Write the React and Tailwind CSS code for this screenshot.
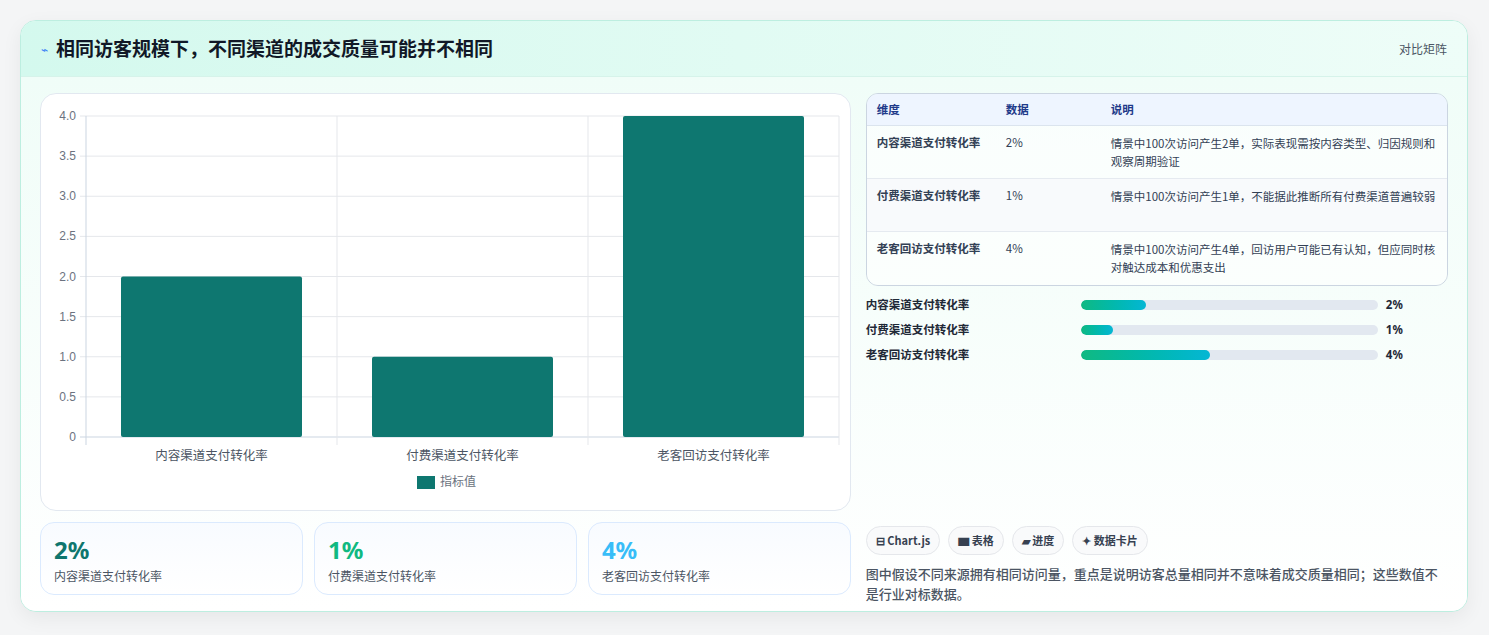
export default function App() {
  const f = { fontFamily: '"Noto Sans CJK SC", "Noto Sans", sans-serif' };
  const rows = [
    ["内容渠道支付转化率", "2%", "情景中100次访问产生2单，实际表现需按内容类型、归因规则和观察周期验证"],
    ["付费渠道支付转化率", "1%", "情景中100次访问产生1单，不能据此推断所有付费渠道普遍较弱"],
    ["老客回访支付转化率", "4%", "情景中100次访问产生4单，回访用户可能已有认知，但应同时核对触达成本和优惠支出"],
  ];
  const bars = [["内容渠道支付转化率", 2, 22], ["付费渠道支付转化率", 1, 11], ["老客回访支付转化率", 4, 43.5]];
  const W = 753, H = 321, X0 = 45, Y0 = 22;
  const cats = ["内容渠道支付转化率", "付费渠道支付转化率", "老客回访支付转化率"];
  const vals = [2, 1, 4];
  return (
    <div className="w-[1489px] h-[635px] bg-[#f4f5f6] pt-[20px] px-[20px]" style={f}>
      <div className="w-[1448px] h-[592px] rounded-[16px] border border-[#bdeee0] bg-white shadow-[0_6px_20px_rgba(0,0,0,0.06)] overflow-hidden flex flex-col">
        <div className="h-[56px] shrink-0 flex items-center justify-between px-[20px] bg-gradient-to-r from-[#d4f9ee] to-[#eefdf8] border-b border-[#d6f3ea]">
          <div className="flex items-center gap-[8px]">
            <span className="text-[#3b82f6] text-[12px]">⌁</span>
            <span className="text-[19px] font-bold text-[#111827]">相同访客规模下，不同渠道的成交质量可能并不相同</span>
          </div>
          <span className="text-[12px] text-[#4b5563]">对比矩阵</span>
        </div>
        <div className="flex-1 flex gap-[15px] px-[19px] pt-[16px] bg-gradient-to-b from-[#f0fdf8] to-white">
          <div className="w-[812px] flex flex-col gap-[11px]">
            <div className="h-[418px] rounded-[16px] border border-[#e2e8f0] bg-white relative">
              <svg width="812" height="418" className="absolute left-0 top-0">
                {[0, 0.5, 1, 1.5, 2, 2.5, 3, 3.5, 4].map((v) => {
                  const y = Y0 + H - (v / 4) * H;
                  return (
                    <g key={v}>
                      <line x1={X0 - 6} x2={X0 + W} y1={y} y2={y} stroke={v === 0 ? "#cbd5e1" : "#e5e7eb"} />
                      <text x={X0 - 10} y={y + 4} textAnchor="end" fontSize="12" fill="#6b7280" fontFamily="Liberation Sans, sans-serif">{v === 0 ? "0" : v.toFixed(1)}</text>
                    </g>
                  );
                })}
                {[0, 1, 2, 3].map((i) => (
                  <line key={i} x1={X0 + (i * W) / 3} x2={X0 + (i * W) / 3} y1={Y0} y2={Y0 + H + 8} stroke={i === 0 ? "#cbd5e1" : "#e5e7eb"} />
                ))}
                {vals.map((v, i) => {
                  const bw = 181, cx = X0 + (i + 0.5) * (W / 3);
                  const h = (v / 4) * H;
                  return (
                    <g key={i}>
                      <rect x={cx - bw / 2} y={Y0 + H - h} width={bw} height={h} rx="2" fill="#0e7770" />
                      <text x={cx} y={Y0 + H + 23} textAnchor="middle" fontSize="12.5" fill="#4b5563" style={f}>{cats[i]}</text>
                    </g>
                  );
                })}
                <rect x="376" y="382" width="18" height="13" fill="#0e7770" />
                <text x="399" y="392" fontSize="12" fill="#6b7280" style={f}>指标值</text>
              </svg>
            </div>
            <div className="flex gap-[11px]">
              {bars.map(([l, v], i) => (
                <div key={i} className="flex-1 h-[73px] rounded-[14px] border border-[#dbeafe] bg-gradient-to-b from-[#f8fbff] to-white px-[13px] pt-[12px]">
                  <div className={`text-[24px] font-bold leading-[30px] ${i === 0 ? "text-[#0f766e]" : i === 1 ? "text-[#10b981]" : "text-[#38bdf8]"}`} style={{ fontFamily: '"Noto Sans", sans-serif' }}>{v}%</div>
                  <div className="text-[12px] text-[#4b5563] mt-[2px]">{l}</div>
                </div>
              ))}
            </div>
          </div>
          <div className="w-[583px] flex flex-col">
            <div className="rounded-[12px] border border-[#cbd5e1] overflow-hidden text-[11.5px]">
              <div className="flex h-[32px] items-center bg-[#eef5ff] border-b border-[#dbe4ee] text-[#1e3a8a] font-bold">
                <div className="w-[139px] pl-[10px]">维度</div>
                <div className="w-[105px]">数据</div>
                <div className="flex-1">说明</div>
              </div>
              {rows.map((r, i) => (
                <div key={i} className={`flex h-[53px] pt-[8px] text-[#334155] ${i < 2 ? "border-b border-[#e5eaf0]" : ""} ${i === 1 ? "bg-[#f8fafc]" : "bg-white/60"}`}>
                  <div className="w-[139px] pl-[10px] font-semibold">{r[0]}</div>
                  <div className="w-[105px]">{r[1]}</div>
                  <div className="flex-1 pr-[10px] leading-[18px]">{r[2]}</div>
                </div>
              ))}
            </div>
            <div className="mt-[10px] flex flex-col gap-[8px]">
              {bars.map(([l, v, p], i) => (
                <div key={i} className="flex items-center h-[17px] text-[11.5px] font-semibold text-[#1f2937]">
                  <div className="w-[215px]">{l}</div>
                  <div className="w-[297px] h-[10px] rounded-full bg-[#e2e8f0] overflow-hidden">
                    <div className="h-full rounded-full bg-gradient-to-r from-[#10b981] to-[#06b6d4]" style={{ width: `${p}%` }} />
                  </div>
                  <div className="ml-[8px] font-bold" style={{ fontFamily: '"Noto Sans", sans-serif' }}>{v}%</div>
                </div>
              ))}
            </div>
            <div className="mt-[163px] flex gap-[8px] text-[11px] font-semibold text-[#374151]">
              {["⊟ Chart.js", "▆ 表格", "▰ 进度", "✦ 数据卡片"].map((c) => (
                <div key={c} className="h-[29px] px-[9px] flex items-center rounded-full border border-[#e5e7eb] bg-[#f9fafb]">{c}</div>
              ))}
            </div>
            <div className="mt-[9px] text-[13px] leading-[20px] text-[#4b5563] font-medium">图中假设不同来源拥有相同访问量，重点是说明访客总量相同并不意味着成交质量相同；这些数值不是行业对标数据。</div>
          </div>
        </div>
      </div>
    </div>
  );
}
